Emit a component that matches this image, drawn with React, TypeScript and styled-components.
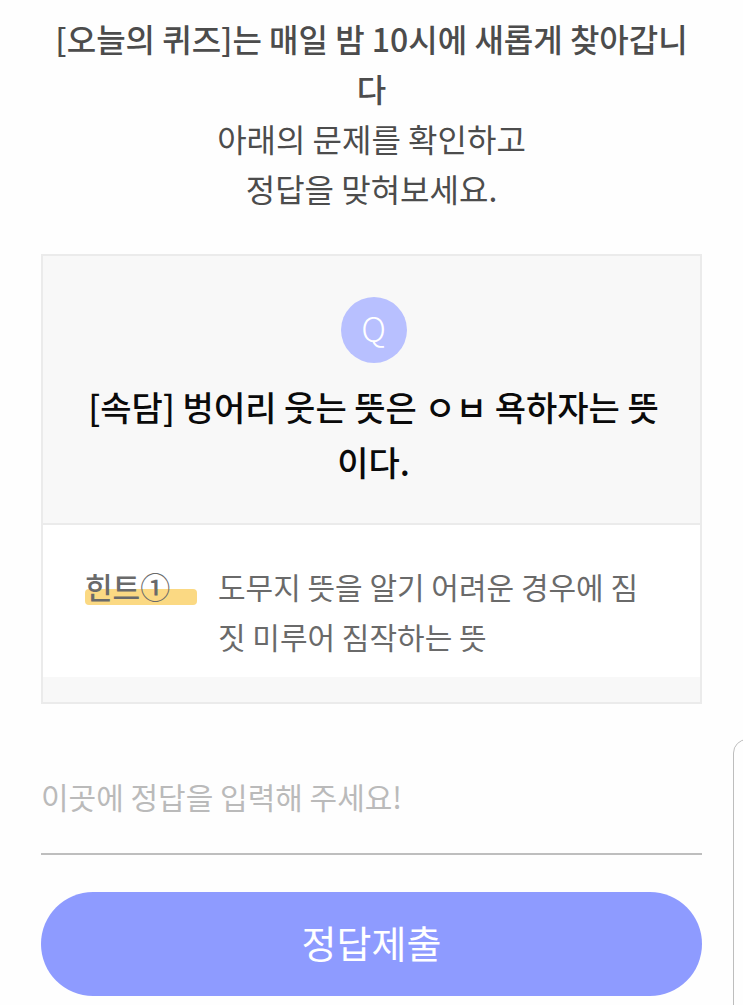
import React from "react";
import styled, { createGlobalStyle } from "styled-components";

const GlobalStyle = createGlobalStyle`
  * { box-sizing: border-box; }
  html, body { margin: 0; padding: 0; }
  body {
    background: #fefefe;
    font-family: "Noto Sans CJK KR", "Noto Sans", sans-serif;
    overflow-x: hidden;
  }
`;

const Page = styled.main`
  display: flex;
  flex-direction: column;
  padding: 13px 41px 10px;
`;

const Intro = styled.header`
  padding: 0 8px;
  color: #4c4c4c;
  font-size: 32px;
  line-height: 50px;
  text-align: center;
`;

const IntroTitle = styled.h1`
  margin: 0;
  font-size: inherit;
  font-weight: 500;
`;

const IntroText = styled.p`
  margin: 0;
`;

const Card = styled.section`
  display: flex;
  flex-direction: column;
  margin-top: 41px;
  padding-bottom: 25px;
  border: 2px solid #ebebeb;
  background: #f8f8f8;
`;

const Question = styled.div`
  display: flex;
  flex-direction: column;
  align-items: center;
  gap: 16px;
  padding: 41px 37px 34px 41px;
  border-bottom: 2px solid #ebebeb;
`;

const Badge = styled.span`
  display: flex;
  align-items: center;
  justify-content: center;
  width: 66px;
  height: 66px;
  padding-bottom: 4px;
  border-radius: 50%;
  background: #b8c0ff;
  color: #fff;
  font-size: 34px;
  font-weight: 300;
  line-height: 62px;
`;

const QuestionText = styled.h2`
  margin: 0;
  color: #0a0a0a;
  font-size: 34px;
  font-weight: 500;
  line-height: 55px;
  text-align: center;
`;

const Hint = styled.div`
  display: grid;
  grid-template-columns: 112px 1fr;
  align-items: start;
  gap: 21px;
  padding: 36px 42px 16px;
  background: #fff;
  color: #6a6a6a;
  font-size: 30px;
  line-height: 50px;
`;

const HintMark = styled.strong`
  position: relative;
  isolation: isolate;
  font-weight: 500;

  &::before {
    content: "";
    position: absolute;
    z-index: -1;
    left: 0;
    right: 0;
    top: 28px;
    height: 16px;
    border-radius: 4px;
    background: #fbd983;
  }
`;

const HintText = styled.p`
  margin: 0;
`;

const AnswerForm = styled.form`
  display: flex;
  flex-direction: column;
  gap: 37px;
  margin-top: 40px;
`;

const AnswerInput = styled.input`
  width: 100%;
  height: 111px;
  padding: 0 0 6px;
  border: 0;
  border-bottom: 2px solid #bebebe;
  border-radius: 0;
  outline: none;
  background: transparent;
  color: #4c4c4c;
  font-family: inherit;
  font-size: 30px;

  &::placeholder {
    color: #bababa;
    opacity: 1;
  }
`;

const SubmitButton = styled.button`
  width: 100%;
  height: 104px;
  padding: 0 0 6px;
  border: 0;
  border-radius: 52px;
  background: #8e9bff;
  color: #fff;
  font-family: inherit;
  font-size: 38px;
  cursor: pointer;
`;

/* Edge of the drawer that peeks in from the right side of the window */
const DrawerEdge = styled.aside`
  position: fixed;
  top: 739px;
  right: -30px;
  bottom: -20px;
  width: 40px;
  border: 1px solid #bdbdbd;
  border-radius: 14px;
  background: #fefefe;
`;

export default function App() {
  return (
    <>
      <GlobalStyle />
      <Page>
        <Intro>
          <IntroTitle>[오늘의 퀴즈]는 매일 밤 10시에 새롭게 찾아갑니다</IntroTitle>
          <IntroText>
            아래의 문제를 확인하고
            <br />
            정답을 맞혀보세요.
          </IntroText>
        </Intro>
        <Card>
          <Question>
            <Badge>Q</Badge>
            <QuestionText>[속담] 벙어리 웃는 뜻은 ㅇㅂ 욕하자는 뜻이다.</QuestionText>
          </Question>
          <Hint>
            <HintMark>힌트①</HintMark>
            <HintText>도무지 뜻을 알기 어려운 경우에 짐짓 미루어 짐작하는 뜻</HintText>
          </Hint>
        </Card>
        <AnswerForm onSubmit={(event) => event.preventDefault()}>
          <AnswerInput
            type="text"
            aria-label="정답"
            placeholder="이곳에 정답을 입력해 주세요!"
          />
          <SubmitButton type="submit">정답제출</SubmitButton>
        </AnswerForm>
      </Page>
      <DrawerEdge aria-hidden="true" />
    </>
  );
}
